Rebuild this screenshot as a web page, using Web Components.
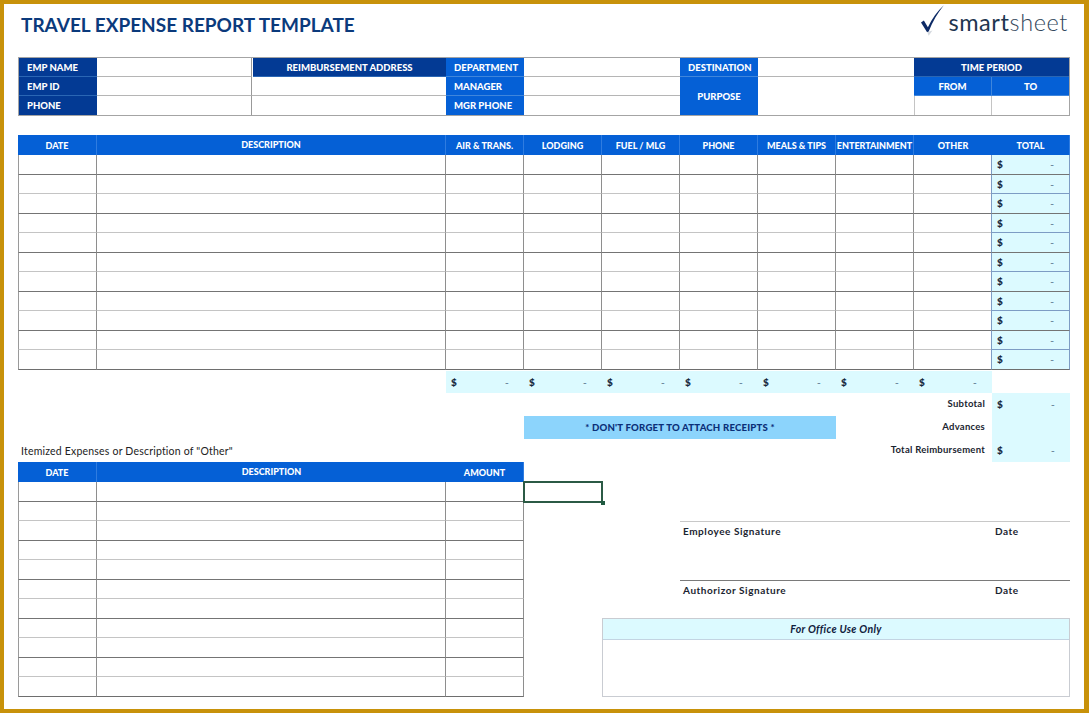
<!DOCTYPE html>
<html>
<head>
<meta charset="utf-8">
<title>Travel Expense Report Template</title>
<style>
  html, body { margin: 0; padding: 0; background: #fff; }
</style>
</head>
<body>
<report-sheet>
  <report-title>TRAVEL EXPENSE REPORT TEMPLATE</report-title>
  <info-panel></info-panel>
  <expense-table
    columns="79 349 78 78 78 78 78 78 78 78"
    labels="DATE|DESCRIPTION|AIR &amp; TRANS.|LODGING|FUEL / MLG|PHONE|MEALS &amp; TIPS|ENTERTAINMENT|OTHER|TOTAL"
    rows="11" money="true" style="width:1052px"></expense-table>
  <summary-band></summary-band>
  <lower-section>
    <expense-table slot="left"
      columns="79 349 78"
      labels="DATE|DESCRIPTION|AMOUNT"
      rows="11" style="width:506px"></expense-table>
  </lower-section>
</report-sheet>

<script>
const HEAD = `font-family: Lato, 'Open Sans', sans-serif; font-weight: 900; color: #fff;`;
const NAVY = '#033a94';
const BLUE = '#0560d6';
const PALE = '#dcfaff';

class ReportSheet extends HTMLElement {
  constructor() {
    super();
    this.attachShadow({ mode: 'open' });
    this.shadowRoot.innerHTML = `
      <style>
        :host {
          display: block;
          box-sizing: border-box;
          width: 1089px;
          height: 713px;
          overflow: hidden;
          background: #fff;
          border-style: solid;
          border-color: #c8920a;
          border-width: 4px 5px 4px 4px;
          padding-left: 14px;
          font-family: Lato, 'Open Sans', sans-serif;
        }
      </style>
      <slot></slot>
    `;
  }
}

class ReportTitle extends HTMLElement {
  constructor() {
    super();
    this.attachShadow({ mode: 'open' });
    this.shadowRoot.innerHTML = `
      <style>
        :host {
          display: flex;
          justify-content: space-between;
          align-items: flex-start;
          width: 1052px;
          height: 53px;
        }
        h1 {
          margin: 9px 0 0 3px;
          font: 700 19px/24px Lato, sans-serif;
          color: #0b3a7c;
        }
        .logo { display: flex; align-items: flex-start; margin-right: 2px; }
        svg { display: block; }
        .word {
          margin: 4px 0 0 4px;
          font: 300 23.5px/28px Lato, sans-serif;
          letter-spacing: .6px;
          color: #33475c;
        }
        .word b { font-weight: 400; color: #1e3650; }
      </style>
      <h1><slot></slot></h1>
      <div class="logo">
        <svg width="23" height="33" viewBox="0 0 24 33">
          <path d="M0 18.5 L3 16.5 L7.2 23.5 C11.5 14.5 17 6.5 23.8 0.5 C17.5 8.5 12 17.5 7.8 28.5 L6.2 28.5 Z" fill="#0d2a66"/>
          <path d="M6.5 28.5 L12 27 L8 32.5 Z" fill="#d5d9df"/>
        </svg>
        <div class="word"><b>smart</b>sheet</div>
      </div>
    `;
  }
}

class InfoPanel extends HTMLElement {
  constructor() {
    super();
    this.attachShadow({ mode: 'open' });
    this.shadowRoot.innerHTML = `
      <style>
        :host {
          display: grid;
          width: 1052px;
          box-sizing: border-box;
          grid-template-columns: 78px 155px 194px 78px 156px 78px 156px 78px 77px;
          grid-template-rows: repeat(3, 19px);
          border: 1px solid #a4a4a4;
          height: 59px;
          margin-bottom: 19px;
        }
        div { box-sizing: border-box; display: flex; align-items: center; font-size: 9.5px; ${HEAD} }
        .n { background: ${NAVY}; padding-left: 8px; border-bottom: 1px solid #2a66b4; }
        .b { background: ${BLUE}; padding-left: 8px; border-bottom: 1px solid #3f86dc; }
        .c { justify-content: center; padding-left: 0; }
        .e { border-bottom: 1px solid #b5b5b5; border-right: 1px solid #b5b5b5; }
        .nr { border-right: 0; }
        .last { border-bottom: 0; }
      </style>
      <div class="n" style="grid-area:1/1">EMP NAME</div>
      <div class="e" style="grid-area:1/2;border-right-color:#999"></div>
      <div class="n c" style="grid-area:1/3;margin-left:1px">REIMBURSEMENT ADDRESS</div>
      <div class="b" style="grid-area:1/4">DEPARTMENT</div>
      <div class="e nr" style="grid-area:1/5"></div>
      <div class="b" style="grid-area:1/6">DESTINATION</div>
      <div class="e nr" style="grid-area:1/7"></div>
      <div class="n c" style="grid-area:1/8/2/10">TIME PERIOD</div>

      <div class="n" style="grid-area:2/1">EMP ID</div>
      <div class="e" style="grid-area:2/2;border-right-color:#999"></div>
      <div class="e nr" style="grid-area:2/3"></div>
      <div class="b" style="grid-area:2/4">MANAGER</div>
      <div class="e nr" style="grid-area:2/5"></div>
      <div class="b c last" style="grid-area:2/6/4/7">PURPOSE</div>
      <div class="e nr last" style="grid-area:2/7/4/8"></div>
      <div class="b c" style="grid-area:2/8;border-right:1px solid #3f86dc">FROM</div>
      <div class="b c" style="grid-area:2/9">TO</div>

      <div class="n last" style="grid-area:3/1">PHONE</div>
      <div class="e last" style="grid-area:3/2;border-right-color:#999"></div>
      <div class="e nr last" style="grid-area:3/3"></div>
      <div class="b last" style="grid-area:3/4">MGR PHONE</div>
      <div class="e nr last" style="grid-area:3/5"></div>
      <div class="e last" style="grid-area:3/8;border-left:1px solid #c4c4c4;border-right-color:#c4c4c4"></div>
      <div class="e nr last" style="grid-area:3/9"></div>
    `;
  }
}

class ExpenseTable extends HTMLElement {
  connectedCallback() {
    if (this.shadowRoot) return;
    this.attachShadow({ mode: 'open' });
    const cols = this.getAttribute('columns').split(' ');
    const labels = this.getAttribute('labels').split('|');
    const rows = +this.getAttribute('rows');
    const money = this.hasAttribute('money');
    let cells = labels.map(l => {
      const up = l === 'DESCRIPTION' ? ' up' : '';
      return `<div class="h${up}">${l}</div>`;
    }).join('');
    for (let r = 0; r < rows; r++) {
      const tone = r === rows - 1 ? 'end' : (r % 2 ? 'light' : 'dark');
      for (let c = 0; c < cols.length; c++) {
        const isTotal = money && c === cols.length - 1;
        cells += isTotal
          ? `<div class="d ${tone} tot"><money-cell></money-cell></div>`
          : `<div class="d ${tone}${c === 0 ? ' first' : ''}"></div>`;
      }
    }
    this.shadowRoot.innerHTML = `
      <style>
        :host {
          display: grid;
          box-sizing: border-box;
          grid-template-columns: ${cols.map(c => c + 'px').join(' ')};
          grid-template-rows: 20px repeat(${rows}, 19.5px);
        }
        .h {
          ${HEAD}
          font-size: 9px;
          background: ${BLUE};
          display: flex;
          align-items: center;
          justify-content: center;
          box-sizing: border-box;
          border-right: 1px solid #2f7ce0;
          padding-top: 1px;
          white-space: nowrap;
        }
        .h:nth-child(${cols.length}) { border-right: 0; }
        .h.up { padding-top: 0; padding-bottom: 2px; }
        .d {
          box-sizing: border-box;
          border-right: 1px solid #8e8e8e;
          border-bottom: 1px solid #777;
        }
        .d.first { border-left: 1px solid #9a9a9a; }
        .d.dark { border-bottom-color: #747474; }
        .d.light { border-bottom-color: #c4c4c4; }
        .d.end { border-bottom-color: #6e6e6e; }
        .tot {
          background: ${PALE};
          border-left: 1px solid #7d9cc4;
          border-right: 1px solid #7d9cc4;
          margin-left: -1px;
          display: flex;
        }
        .tot.light { border-bottom-color: #7d9cc4; }
      </style>
      ${cells}
    `;
  }
}

class MoneyCell extends HTMLElement {
  constructor() {
    super();
    this.attachShadow({ mode: 'open' });
    this.shadowRoot.innerHTML = `
      <style>
        :host {
          flex: 1;
          display: flex;
          align-items: center;
          justify-content: space-between;
          height: 100%;
          width: 100%;
          box-sizing: border-box;
          padding: 0 15px 0 5px;
          font: 900 10px Lato, sans-serif;
          color: #14263c;
        }
        i { font-style: normal; color: #6f8aa0; font-weight: 700; }
      </style>
      <span>$</span><i>-</i>
    `;
  }
}

class SummaryBand extends HTMLElement {
  constructor() {
    super();
    this.attachShadow({ mode: 'open' });
    const bottom = [3, 4, 5, 6, 7, 8, 9]
      .map(c => `<div class="m" style="grid-column:${c}"><money-cell></money-cell></div>`).join('');
    this.shadowRoot.innerHTML = `
      <style>
        :host {
          display: grid;
          width: 1052px;
          margin-top: 1.5px;
          grid-template-columns: 79px 349px repeat(8, 78px);
          grid-template-rows: 22px 23px 23px 23px;
          font: 700 9.5px Lato, sans-serif;
          letter-spacing: .25px;
          color: #1a2430;
        }
        .m { background: ${PALE}; grid-row: 1; display: flex; padding-bottom: 1px; box-sizing: border-box; }
        .m.t { grid-column: 10; }
        .lab {
          grid-column: 8 / 10;
          display: flex;
          align-items: center;
          justify-content: flex-end;
          padding: 0 7px 2px 0;
          white-space: nowrap;
        }
        .banner {
          grid-column: 4 / 8;
          grid-row: 3;
          background: #8cd4fc;
          color: #0b2f78;
          font: 900 9.6px Lato, sans-serif;
          letter-spacing: .2px;
          display: flex;
          align-items: center;
          justify-content: center;
        }
        .note {
          grid-column: 1 / 4;
          grid-row: 4;
          padding-left: 3px;
          font: 400 10.5px Lato, sans-serif;
          letter-spacing: .2px;
          color: #222;
          display: flex;
          align-items: center;
        }
      </style>
      ${bottom}
      <div class="lab" style="grid-row:2">Subtotal</div>
      <div class="m t" style="grid-row:2"><money-cell></money-cell></div>
      <div class="banner">* DON'T FORGET TO ATTACH RECEIPTS *</div>
      <div class="lab" style="grid-row:3">Advances</div>
      <div class="m t" style="grid-row:3"></div>
      <div class="note">Itemized Expenses or Description of "Other"</div>
      <div class="lab" style="grid-row:4">Total Reimbursement</div>
      <div class="m t" style="grid-row:4"><money-cell></money-cell></div>
    `;
  }
}

class LowerSection extends HTMLElement {
  constructor() {
    super();
    this.attachShadow({ mode: 'open' });
    this.shadowRoot.innerHTML = `
      <style>
        :host { display: flex; width: 1052px; }
        .side { width: 546px; display: flex; flex-direction: column; padding-top: 19px; box-sizing: border-box; }
        .sel {
          position: relative;
          width: 80px;
          height: 22px;
          margin-left: -1px;
          box-sizing: border-box;
          border: 2px solid #2b5a45;
          border-bottom-width: 2px;
        }
        .sel::after {
          content: '';
          position: absolute;
          right: -4px;
          bottom: -4px;
          width: 4px;
          height: 4px;
          background: #1f5a40;
        }
        .sig {
          margin: 18px 0 0 156px;
          height: 59px;
          box-sizing: border-box;
          border-top: 1px solid #c8c8c8;
          padding: 3px 35px 0 3px;
          display: flex;
          justify-content: space-between;
          font: 700 10px/12px Lato, sans-serif;
          letter-spacing: .55px;
          color: #1a2430;
        }
        .sig + .sig { margin-top: 0; height: 38px; border-top-color: #7a7a7a; }
        .sig span:last-child { width: 40px; }
        .office {
          margin-left: 78px;
          height: 79px;
          box-sizing: border-box;
          border: 1px solid #c9ccd2;
        }
        .office div {
          height: 19.5px;
          background: ${PALE};
          border-bottom: 1px solid #c3d4e2;
          display: flex;
          align-items: center;
          justify-content: center;
          font: italic 700 10.5px Lato, sans-serif;
          letter-spacing: .3px;
          color: #10203c;
        }
      </style>
      <slot name="left"></slot>
      <div class="side">
        <div class="sel"></div>
        <div class="sig"><span>Employee Signature</span><span>Date</span></div>
        <div class="sig"><span>Authorizor Signature</span><span>Date</span></div>
        <div class="office"><div>For Office Use Only</div></div>
      </div>
    `;
  }
}

customElements.define('report-sheet', ReportSheet);
customElements.define('report-title', ReportTitle);
customElements.define('info-panel', InfoPanel);
customElements.define('money-cell', MoneyCell);
customElements.define('expense-table', ExpenseTable);
customElements.define('summary-band', SummaryBand);
customElements.define('lower-section', LowerSection);
</script>
</body>
</html>
